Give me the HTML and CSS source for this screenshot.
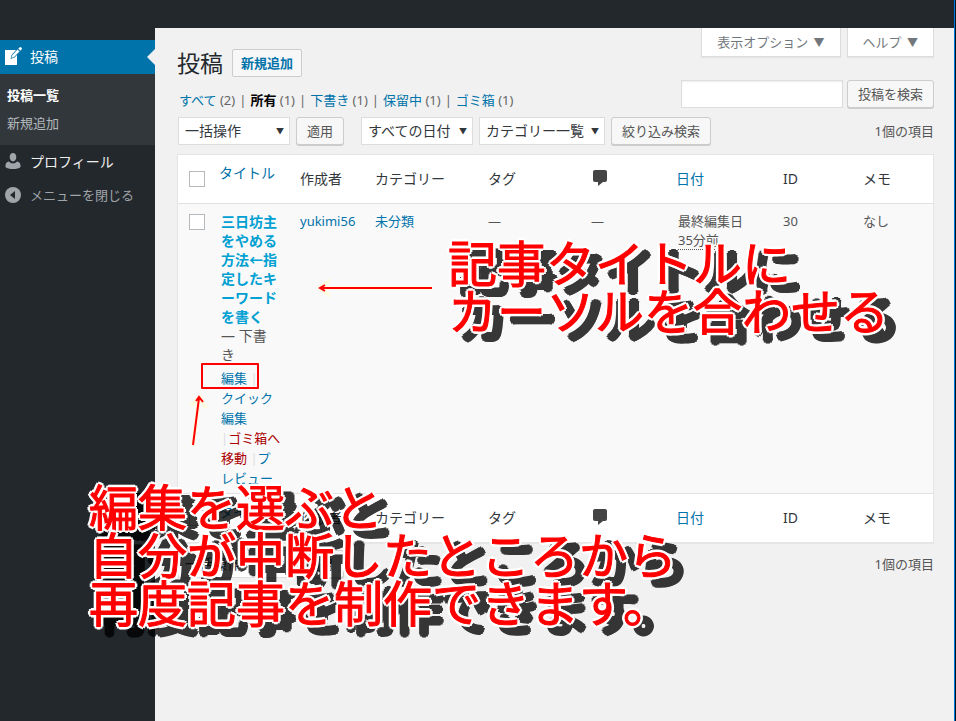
FILE: index.html
```html
<!DOCTYPE html>
<html lang="ja">
<head>
    <meta charset="UTF-8">
    <meta name="viewport" content="width=device-width, initial-scale=1.0">
    <title>投稿</title>
    <link rel="stylesheet" href="styles.css">
</head>
<body>
    <header class="adminbar"></header>
    <div class="wrap">
        <nav class="sidebar">
            <a href="#" class="menu-item current">
                <svg class="menu-icon" viewBox="0 0 18 18"><path fill="#fff" d="M1 3h11L7.500 8 6.500 12l4-1.500L13 8v10H1z"/><path fill="#fff" d="M13.500 2.500l2 2-5.500 5.500-2.500 1 .5-2.500zM14.300 1.700l1.400-1.400q.8-.5 1.500.2l.5.500q.5.800-.1 1.400l-1.300 1.300z"/></svg>
                投稿
            </a>
            <div class="submenu">
                <a href="#" class="active">投稿一覧</a>
                <a href="#">新規追加</a>
            </div>
            <a href="#" class="menu-item">
                <svg class="menu-icon" viewBox="0 0 18 18"><path fill="#a0a5aa" d="M9 1c2.200 0 3.300 1.800 3.300 4S11 9.500 9 9.500 5.700 7.200 5.700 5 6.800 1 9 1zM5 9.500c1 1.300 2.400 2 4 2s3-.7 4-2c2.500.5 3.500 2 3.500 4V15c-1.500 1.500-4 2-7.500 2s-6-.5-7.500-2v-1.500c0-2 1-3.500 3.500-4z"/></svg>
                プロフィール
            </a>
            <button type="button" class="menu-item collapse">
                <svg class="menu-icon" viewBox="0 0 18 18"><circle cx="9" cy="9" r="8" fill="#a0a5aa"/><path fill="#23282d" d="M11 5v8L6 9z"/></svg>
                メニューを閉じる
            </button>
        </nav>

        <main class="content">
            <div class="page-head">
                <div class="head-left">
                    <div class="title-row">
                        <h1>投稿</h1>
                        <a href="#" class="add-new">新規追加</a>
                    </div>
                    <ul class="views">
                        <li><a href="#">すべて</a> (2)</li>
                        <li><a href="#" class="active">所有</a> (1)</li>
                        <li><a href="#">下書き</a> (1)</li>
                        <li><a href="#">保留中</a> (1)</li>
                        <li><a href="#">ゴミ箱</a> (1)</li>
                    </ul>
                </div>
                <div class="head-right">
                    <div class="screen-links">
                        <button type="button">表示オプション <span>▼</span></button>
                        <button type="button">ヘルプ <span>▼</span></button>
                    </div>
                    <form class="search">
                        <input type="search" aria-label="投稿を検索">
                        <button type="button" class="btn">投稿を検索</button>
                    </form>
                </div>
            </div>

            <div class="tablenav">
                <span class="select"><select aria-label="一括操作"><option>一括操作</option></select></span>
                <button type="button" class="btn apply">適用</button>
                <span class="select"><select aria-label="日付"><option>すべての日付</option></select></span>
                <span class="select wide"><select aria-label="カテゴリー"><option>カテゴリー一覧</option></select></span>
                <button type="button" class="btn">絞り込み検索</button>
                <span class="count">1個の項目</span>
            </div>

            <table class="posts">
                <colgroup>
                    <col class="col-cb"><col><col class="col-author"><col class="col-cat"><col class="col-tags"><col class="col-comments"><col class="col-date"><col class="col-id"><col class="col-memo">
                </colgroup>
                <thead>
                    <tr>
                        <th><input type="checkbox" aria-label="すべて選択"></th>
                        <th class="sort title"><a href="#">タイトル</a></th>
                        <th>作成者</th>
                        <th>カテゴリー</th>
                        <th>タグ</th>
                        <th><svg class="bubble" viewBox="0 0 14 16"><path d="M2 0h10q2 0 2 2v8q0 2-2 2H10L5 16v-4H2q-2 0-2-2V2q0-2 2-2z"/></svg></th>
                        <th class="sort"><a href="#">日付</a></th>
                        <th>ID</th>
                        <th>メモ</th>
                    </tr>
                </thead>
                <tbody>
                    <tr>
                        <td><input type="checkbox" aria-label="投稿を選択"></td>
                        <td class="post-title">
                            <a href="#" class="row-title">三日坊主をやめる方法←指定したキーワードを書く</a>
                            <span class="state">— 下書き</span>
                            <div class="row-actions">
                                <a href="#">編集</a> <i>|</i><br>
                                <a href="#">クイック<br>編集</a><br>
                                <i>|</i><a href="#" class="trash">ゴミ箱へ<br>移動</a> <i>|</i><a href="#">プ<br>レビュー</a>
                            </div>
                        </td>
                        <td><a href="#">yukimi56</a></td>
                        <td><a href="#">未分類</a></td>
                        <td>—</td>
                        <td>—</td>
                        <td>最終編集日<br><abbr>35分前</abbr></td>
                        <td>30</td>
                        <td>なし</td>
                    </tr>
                </tbody>
                <tfoot>
                    <tr>
                        <th><input type="checkbox" aria-label="すべて選択"></th>
                        <th class="sort title"><a href="#">タイトル</a></th>
                        <th>作成者</th>
                        <th>カテゴリー</th>
                        <th>タグ</th>
                        <th><svg class="bubble" viewBox="0 0 14 16"><path d="M2 0h10q2 0 2 2v8q0 2-2 2H10L5 16v-4H2q-2 0-2-2V2q0-2 2-2z"/></svg></th>
                        <th class="sort"><a href="#">日付</a></th>
                        <th>ID</th>
                        <th>メモ</th>
                    </tr>
                </tfoot>
            </table>

            <div class="tablenav bottom">
                <span class="select"><select aria-label="一括操作"><option>一括操作</option></select></span>
                <button type="button" class="btn">適用</button>
                <span class="count">1個の項目</span>
            </div>
        </main>
    </div>

    <!-- notes drawn over the screen -->
    <svg class="arrow arrow-title" viewBox="0 0 120 24">
        <path class="glow" d="M118 12H6M16 4L6 12l10 8"/>
        <path class="line" d="M118 12H6M11 9l-5 3 5 3"/>
    </svg>
    <svg class="arrow arrow-edit" viewBox="0 0 24 60">
        <path class="glow" d="M8 55l6-47M6 16l9-9 6 11"/>
        <path class="line" d="M8 55l6-47M11 11l3-4 4 5"/>
    </svg>
    <div class="edit-frame"></div>
    <p class="note note-title">記事タイトルに<br>カーソルを合わせる</p>
    <p class="note note-edit">編集を選ぶと<br>自分が中断したところから<br>再度記事を制作できます。</p>
</body>
</html>
```
FILE: styles.css
```css
* { box-sizing: border-box; }
html { background: #06121c; }
body {
    margin: 0 1px 0 0;
    min-height: 100vh;
    display: flex;
    flex-direction: column;
    position: relative;
    background: #f1f1f1;
    color: #555;
    font: 13px/19px "Noto Sans", "Noto Sans CJK JP", sans-serif;
    border-right: 1px solid #0078d7;
}
a { color: #0073aa; text-decoration: none; }
button, input, select { font: inherit; }

.adminbar { height: 28px; background: #23282d; }
.wrap { display: flex; flex: 1; }

/* sidebar */
.sidebar {
    width: 155px;
    flex-shrink: 0;
    padding-top: 12px;
    background: #23282d;
}
.menu-item {
    display: flex;
    align-items: center;
    gap: 8px;
    width: 100%;
    height: 34px;
    padding: 0 4px 2px;
    border: 0;
    background: none;
    color: #eee;
    font-size: 14px;
    white-space: nowrap;
    position: relative;
}
.menu-item.current { background: #0073aa; color: #fff; }
.menu-item.current::after {
    content: "";
    position: absolute;
    right: 0;
    top: 9px;
    border: 8px solid transparent;
    border-left: 0;
    border-right-color: #f1f1f1;
}
.menu-item.collapse { color: #a0a5aa; font-size: 13px; }
.menu-icon { width: 18px; height: 18px; flex-shrink: 0; }
.submenu {
    padding: 7px 7px 8px;
    background: #32373c;
}
.submenu a {
    display: block;
    line-height: 28px;
    color: #b4b9be;
}
.submenu a.active { color: #fff; font-weight: bold; }

/* content */
.content {
    flex: 1;
    min-width: 0;
    padding: 0 20px 0 22px;
}
.page-head { display: flex; justify-content: space-between; }
.head-left { padding-top: 21px; }
.title-row { display: flex; align-items: center; gap: 9px; }
h1 {
    margin: 0;
    color: #23282d;
    font-size: 23px;
    font-weight: normal;
    line-height: 28px;
}
.add-new {
    height: 28px;
    padding: 0 8px;
    border: 1px solid #ccc;
    border-radius: 2px;
    background: #f7f7f7;
    font-weight: bold;
    line-height: 26px;
}
.views {
    display: flex;
    margin: 14px 0 0;
    padding: 0 0 0 2px;
    list-style: none;
    color: #666;
}
.views li + li::before { content: "|"; margin: 0 4px; }
.views .active { color: #000; font-weight: bold; }

.screen-links { display: flex; justify-content: flex-end; gap: 6px; }
.screen-links button {
    height: 29px;
    padding: 0 15px;
    border: 1px solid #ddd;
    border-top: 0;
    background: #fff;
    color: #72777c;
    box-shadow: 0 1px 1px rgba(0, 0, 0, .05);
}
.screen-links span { margin-left: 2px; font-size: 11px; }
.search { display: flex; gap: 4px; margin-top: 23px; justify-content: flex-end; }
.search input {
    width: 162px;
    height: 28px;
    border: 1px solid #ddd;
    background: #fff;
    box-shadow: inset 0 1px 2px rgba(0, 0, 0, .07);
}
.btn {
    height: 28px;
    padding: 0 10px;
    border: 1px solid #ccc;
    border-radius: 3px;
    background: #f7f7f7;
    color: #555;
    box-shadow: 0 1px 0 #ccc;
    line-height: 26px;
    white-space: nowrap;
}

.tablenav {
    display: flex;
    align-items: center;
    gap: 6px;
    margin: 7px 0 9px;
    padding-left: 1px;
}
.apply { margin-right: 11px; }
.count { margin-left: auto; }
.select { position: relative; width: 112px; }
.select.wide { width: 126px; }
.select select {
    appearance: none;
    display: block;
    width: 100%;
    height: 28px;
    padding: 0 6px 2px;
    border: 1px solid #ddd;
    border-radius: 0;
    background: #fff;
    color: #32373c;
    font-size: 14px;
}
.select::after {
    content: "▼";
    position: absolute;
    right: 6px;
    top: 4px;
    color: #32373c;
    font-size: 8px;
    pointer-events: none;
}

/* posts table */
.posts {
    width: 100%;
    table-layout: fixed;
    border: 1px solid #e5e5e5;
    border-spacing: 0;
    background: #fff;
    box-shadow: 0 1px 1px rgba(0, 0, 0, .04);
}
.col-cb { width: 33px; }
.col-author { width: 75px; }
.col-cat { width: 113px; }
.col-tags { width: 103px; }
.col-comments { width: 87px; }
.col-date { width: 105px; }
.col-id, .col-memo { width: 80px; }
th {
    height: 48px;
    padding: 0 10px 2px;
    color: #32373c;
    font-size: 14px;
    font-weight: normal;
    text-align: left;
    white-space: nowrap;
}
th.sort { padding: 0 8px 2px; }
th.title { padding-top: 8px; vertical-align: top; }
td {
    padding: 8px 10px;
    border: 1px solid #e1e1e1;
    border-width: 1px 0;
    background: #f9f9f9;
    vertical-align: top;
    white-space: nowrap;
}
abbr { border-bottom: 1px dotted #555; }
.posts input {
    appearance: none;
    display: block;
    width: 16px;
    height: 16px;
    margin: 2px 0 0 1px;
    border: 1px solid #b4b9be;
    background: #fff;
}
.bubble { display: block; width: 14px; height: 16px; margin-left: 2px; fill: #444; }
td.post-title { padding-bottom: 5px; white-space: normal; }
.row-title {
    display: block;
    color: #00a0d2;
    font-size: 14px;
    font-weight: bold;
    line-break: anywhere;
}
.state {
    display: block;
    font-size: 14px;
    line-break: anywhere;
}
.row-actions { margin-top: 4px; line-height: 20px; white-space: nowrap; }
.row-actions i { color: #ddd; font-style: normal; }
.row-actions .trash { color: #a00; }

/* notes */
.arrow { position: absolute; fill: none; }
.arrow .line { stroke: #f00; stroke-width: 2; }
.arrow .glow { stroke: #fffbe0; stroke-width: 4; }
.arrow-title { left: 314px; top: 276px; width: 120px; }
.arrow-edit { left: 185px; top: 390px; width: 24px; }
.edit-frame {
    position: absolute;
    left: 201px;
    top: 363px;
    width: 58px;
    height: 26px;
    border: 2px solid #f00;
    border-radius: 1px;
}
.note {
    position: absolute;
    margin: 0;
    color: #f00;
    font-family: "Noto Sans CJK JP", sans-serif;
    font-size: 49px;
    line-height: 48px;
    white-space: nowrap;
    -webkit-text-stroke: 1px #f00;
    text-shadow: 3px 0 #fff, -3px 0 #fff, 0 3px #fff, 0 -3px #fff,
        2px 2px #fff, -2px 2px #fff, 2px -2px #fff, -2px -2px #fff;
    filter: drop-shadow(11px 8px 0 rgba(0, 0, 0, .78));
}
.note-title { left: 448px; top: 237px; }
.note-edit { left: 89px; top: 481px; }
```
